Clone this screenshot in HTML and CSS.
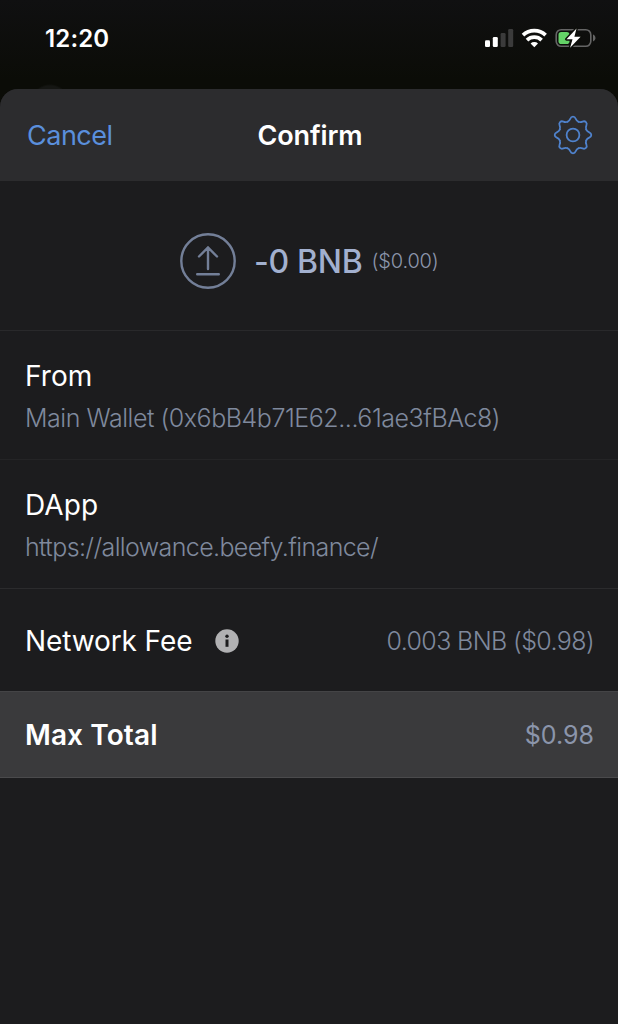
FILE: index.html
```html
<!DOCTYPE html>
<html lang="en">
<head>
<meta charset="utf-8">
<title>Confirm</title>
<link rel="stylesheet" href="styles.css">
</head>
<body>
<div class="screen">
  <div class="status">
    <span class="time">12:20</span>
    <svg class="indicators" width="112" height="24" viewBox="0 0 112 24">
      <g fill="#fff"><rect x="1" y="14.3" width="5" height="6.7" rx="1.3"/><rect x="8.8" y="11" width="5" height="10" rx="1.3"/></g>
      <g fill="#3b3b3b"><rect x="16.6" y="7" width="5" height="14" rx="1.3"/><rect x="24.2" y="3" width="5" height="18" rx="1.3"/></g>
      <g fill="none" stroke="#fff" stroke-width="3.7"><path d="M39 9.2a16.3 16.3 0 0 1 22.6 0"/><path d="M43 14.1a10.5 10.5 0 0 1 14.6 0"/></g>
      <path fill="#fff" d="M46.600 17.500a5.400 5.400 0 0 1 7.400 0L50.300 21.200z"/>
      <rect x="72.200" y="3.700" width="34.600" height="16.600" rx="5" fill="none" stroke="#656565" stroke-width="1.600"/>
      <path fill="#656565" d="M109 8.600c3.300 1.200 3.300 5.700 0 6.900z"/>
      <rect x="74.500" y="6" width="11" height="12" rx="2.800" fill="#64d267"/>
      <path d="M92.500 2.500 82.500 13.200h6l-2.400 8.600L96.600 10.800h-6.200z" fill="#fff" stroke="#0e0f0b" stroke-width="3" paint-order="stroke" stroke-linejoin="round"/>
    </svg>
  </div>
  <main class="sheet">
    <header class="nav">
      <span class="cancel">Cancel</span>
      <span class="title">Confirm</span>
      <svg class="gear" width="40" height="40" viewBox="-20 -20 40 40">
        <defs><path id="tooth" d="M-5.470-13.210C-1.600-14.800-3.700-18.300 0-18.300S1.600-14.800 5.470-13.210"/></defs>
        <use href="#tooth"/><use href="#tooth" transform="rotate(45)"/><use href="#tooth" transform="rotate(90)"/><use href="#tooth" transform="rotate(135)"/><use href="#tooth" transform="rotate(180)"/><use href="#tooth" transform="rotate(225)"/><use href="#tooth" transform="rotate(270)"/><use href="#tooth" transform="rotate(315)"/>
        <circle r="6.400"/>
      </svg>
    </header>
    <section class="amount">
      <svg class="send" width="56" height="56" viewBox="0 0 56 56">
        <circle cx="28" cy="28" r="26.700"/><path d="M28 36V15M19 23.500 28 14.500l9 9M17.200 41.200h21.600"/>
      </svg>
      <span class="coins">-0 BNB</span>
      <span class="fiat">($0.00)</span>
    </section>
    <section class="detail">
      <div class="label">From</div>
      <div class="value wallet">Main Wallet (0x6bB4b71E62...61ae3fBAc8)</div>
    </section>
    <section class="detail dapp">
      <div class="label">DApp</div>
      <div class="value url">https://allowance.beefy.finance/</div>
    </section>
    <section class="fee">
      <span class="label network">Network Fee</span>
      <svg class="info" width="24" height="24" viewBox="0 0 24 24"><circle cx="12" cy="12" r="11.700" fill="#b1b1b3"/><g fill="#1c1c1e"><circle cx="12" cy="7.300" r="1.700"/><path d="M10.500 10.500h3v7.300h-3z"/></g></svg>
      <span class="value cost">0.003 BNB ($0.98)</span>
    </section>
    <section class="total">
      <span class="label">Max Total</span>
      <span class="value">$0.98</span>
    </section>
  </main>
</div>
</body>
</html>
```
FILE: styles.css
```css
* { box-sizing: border-box; }
body { margin: 0; background: #0c0d0a; font-family: Inter, "Liberation Sans", sans-serif; color: #fff; }
.screen { height: 1024px; display: flex; flex-direction: column; overflow: hidden; background: radial-gradient(circle 20px at 50px 104px, #151613 90%, transparent), linear-gradient(#101011, #0b0c07 80px); white-space: nowrap; }
.status { height: 89px; flex: none; display: flex; justify-content: space-between; align-items: flex-start; padding: 24px 22px 0 45px; }
.time { font-size: 24px; line-height: 30px; font-weight: 600; letter-spacing: 0.15px; }
.indicators { margin-top: 2px; }
.sheet { flex: 1; background: #1c1c1e; border-radius: 18px 18px 0 0; overflow: hidden; }
.nav { height: 92px; background: #2c2c2e; display: grid; grid-template-columns: 1fr auto 1fr; align-items: center; padding: 0 25px 0 27px; }
.cancel { padding-top: 1px; font-size: 27px; letter-spacing: -0.5px; color: #5a8fdc; }
.title { padding-top: 1px; font-size: 27px; font-weight: 600; letter-spacing: -0.1px; }
.gear { justify-self: end; fill: none; stroke: #4f82cc; stroke-width: 1.8; stroke-linecap: round; }
.amount { height: 150px; border-bottom: 1px solid #29292b; display: flex; align-items: center; padding: 10px 0 0 180px; }
.send { fill: none; stroke: #737f98; stroke-width: 2.4; stroke-linecap: round; }
.coins { margin-left: 18px; padding-top: 2px; font-size: 32px; font-weight: 500; letter-spacing: -0.3px; color: #a2b0cf; }
.fiat { margin-left: 9px; padding-top: 1px; font-size: 20px; font-weight: 300; letter-spacing: -0.15px; color: #8c96ac; }
.detail { height: 129px; border-bottom: 1px solid #242426; padding: 26px 25px 0; }
.dapp { border-color: #2b2b2d; }
.label { font-size: 28px; line-height: 38px; letter-spacing: 0.1px; }
.network { letter-spacing: -0.1px; }
.value { font-size: 25px; line-height: 34px; font-weight: 300; color: #7f899d; }
.detail .value { margin-top: 6px; }
.wallet { letter-spacing: -0.46px; }
.url { letter-spacing: -0.62px; }
.cost { letter-spacing: -0.62px; }
.fee { height: 102px; display: flex; align-items: center; padding: 2px 24px 0 25px; }
.info { margin-left: 23px; }
.fee .value, .total .value { margin-left: auto; }
.total { height: 87px; background: #3a3a3c; border-top: 1px solid #444446; border-bottom: 1px solid #4a4a4c; display: flex; align-items: center; padding: 1px 24px 0 25px; }
.total .label { font-weight: 600; }
.total .value { font-weight: 400; color: #8b95ab; }
```
